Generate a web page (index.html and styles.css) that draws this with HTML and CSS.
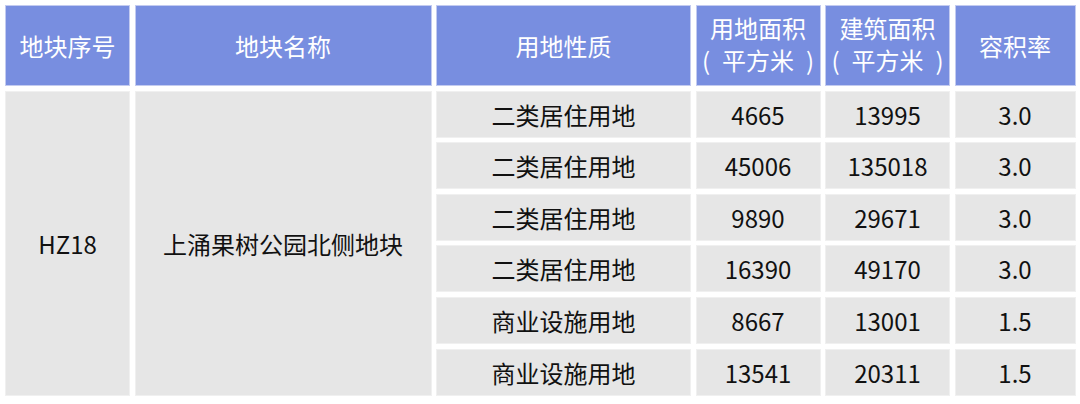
FILE: index.html
```html
<!DOCTYPE html>
<html lang="zh-CN">
<head>
<meta charset="utf-8">
<link rel="stylesheet" href="styles.css">
</head>
<body>
<div class="table">
  <div class="cell head">地块序号</div>
  <div class="cell head">地块名称</div>
  <div class="cell head">用地性质</div>
  <div class="cell head two"><span class="ln">用地面积</span><span class="ln">(&ensp;平方米&ensp;)</span></div>
  <div class="cell head two"><span class="ln">建筑面积</span><span class="ln">(&ensp;平方米&ensp;)</span></div>
  <div class="cell head">容积率</div>

  <div class="cell body span6">HZ18</div>
  <div class="cell body span6">上涌果树公园北侧地块</div>

  <div class="cell body">二类居住用地</div>
  <div class="cell body">4665</div>
  <div class="cell body">13995</div>
  <div class="cell body">3.0</div>

  <div class="cell body">二类居住用地</div>
  <div class="cell body">45006</div>
  <div class="cell body">135018</div>
  <div class="cell body">3.0</div>

  <div class="cell body">二类居住用地</div>
  <div class="cell body">9890</div>
  <div class="cell body">29671</div>
  <div class="cell body">3.0</div>

  <div class="cell body">二类居住用地</div>
  <div class="cell body">16390</div>
  <div class="cell body">49170</div>
  <div class="cell body">3.0</div>

  <div class="cell body">商业设施用地</div>
  <div class="cell body">8667</div>
  <div class="cell body">13001</div>
  <div class="cell body">1.5</div>

  <div class="cell body">商业设施用地</div>
  <div class="cell body">13541</div>
  <div class="cell body">20311</div>
  <div class="cell body">1.5</div>
</div>
</body>
</html>
```
FILE: styles.css
```css
html, body {
  margin: 0;
  padding: 0;
  background: #ffffff;
}

body {
  padding: 4.5px 0 0 5px;
  font-family: "Noto Sans CJK SC", "Noto Sans", sans-serif;
}

.table {
  display: grid;
  grid-template-columns: 125px 297px 255px 125px 125px 121px;
  grid-template-rows: 81.5px repeat(6, 47px);
  column-gap: 4.5px;
  row-gap: 4.6px;
}

.cell {
  display: flex;
  align-items: center;
  justify-content: center;
  text-align: center;
  font-size: 24px;
}

.head {
  background: #788ee0;
  color: #ffffff;
  box-shadow: inset 0 0 0 1px #c3cbf0;
}

.head.two {
  flex-direction: column;
  padding-bottom: 2px;
}

.head.two .ln {
  display: block;
  line-height: 32px;
}

.body {
  background: #e6e6e6;
  color: #111111;
  box-shadow: inset 0 0 0 1px #f0f0f0;
}

.span6 {
  grid-row: span 6;
}
```
